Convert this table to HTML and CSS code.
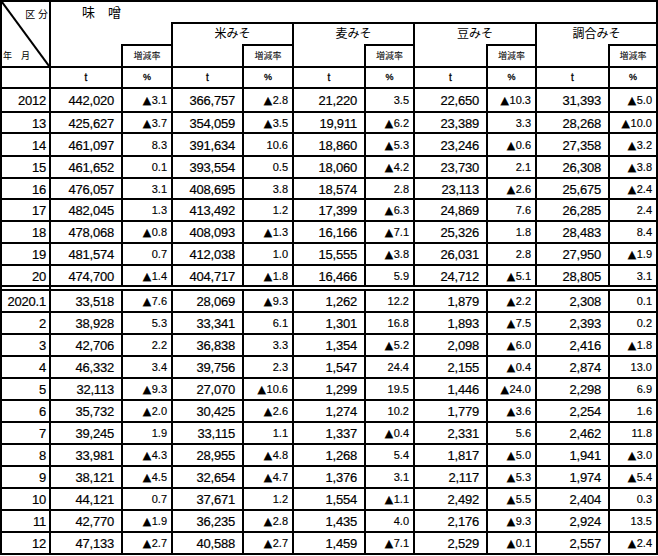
FILE: index.html
```html
<!DOCTYPE html>
<html lang="ja">
<head>
<meta charset="utf-8">
<title>味噌 生産量</title>
<link rel="stylesheet" href="styles.css">
</head>
<body>
<table class="tbl">
<colgroup>
<col class="w49"><col class="w72"><col class="w50"><col class="w71"><col class="w50"><col class="w72"><col class="w49"><col class="w73"><col class="w49"><col class="w73"><col class="w48">
</colgroup>
<tbody>
<tr class="hA">
<td class="corner" rowspan="3"><div class="corner-box"><svg class="diag" viewBox="0 0 100 100" preserveAspectRatio="none"><line x1="0" y1="0" x2="100" y2="100" stroke="#000" stroke-width="2" vector-effect="non-scaling-stroke"/></svg><span class="kubun">区 分</span><span class="nengetsu">年　月</span></div></td>
<td class="title nb-r nb-b">味　噌</td>
<td class="nb-l nb-r nb-b"></td>
<td class="nb-l" colspan="8"></td>
</tr>
<tr class="hB">
<td class="nb-t nb-b nb-r"></td>
<td class="nb-t nb-l"></td>
<td class="kind nb-b" colspan="2">米みそ</td>
<td class="kind nb-b" colspan="2">麦みそ</td>
<td class="kind nb-b" colspan="2">豆みそ</td>
<td class="kind nb-b" colspan="2">調合みそ</td>
</tr>
<tr class="hC">
<td class="nb-t"></td><td class="rate">増減率</td>
<td class="nb-t"></td><td class="rate">増減率</td>
<td class="nb-t"></td><td class="rate">増減率</td>
<td class="nb-t"></td><td class="rate">増減率</td>
<td class="nb-t"></td><td class="rate">増減率</td>
</tr>
<tr class="hD">
<td></td>
<td class="u">t</td><td class="u pc">%</td>
<td class="u">t</td><td class="u pc">%</td>
<td class="u">t</td><td class="u pc">%</td>
<td class="u">t</td><td class="u pc">%</td>
<td class="u">t</td><td class="u pc">%</td>
</tr>
<tr class="h24"><td class="yr">2012</td><td class="n">442,020</td><td class="p"><span class="tri">▲</span>3.1</td><td class="n">366,757</td><td class="p"><span class="tri">▲</span>2.8</td><td class="n">21,220</td><td class="p">3.5</td><td class="n">22,650</td><td class="p"><span class="tri">▲</span>10.3</td><td class="n">31,393</td><td class="p"><span class="tri">▲</span>5.0</td></tr>
<tr class="h21"><td class="yr">13</td><td class="n">425,627</td><td class="p"><span class="tri">▲</span>3.7</td><td class="n">354,059</td><td class="p"><span class="tri">▲</span>3.5</td><td class="n">19,911</td><td class="p"><span class="tri">▲</span>6.2</td><td class="n">23,389</td><td class="p">3.3</td><td class="n">28,268</td><td class="p"><span class="tri">▲</span>10.0</td></tr>
<tr class="h23"><td class="yr">14</td><td class="n">461,097</td><td class="p">8.3</td><td class="n">391,634</td><td class="p">10.6</td><td class="n">18,860</td><td class="p"><span class="tri">▲</span>5.3</td><td class="n">23,246</td><td class="p"><span class="tri">▲</span>0.6</td><td class="n">27,358</td><td class="p"><span class="tri">▲</span>3.2</td></tr>
<tr class="h22"><td class="yr">15</td><td class="n">461,652</td><td class="p">0.1</td><td class="n">393,554</td><td class="p">0.5</td><td class="n">18,060</td><td class="p"><span class="tri">▲</span>4.2</td><td class="n">23,730</td><td class="p">2.1</td><td class="n">26,308</td><td class="p"><span class="tri">▲</span>3.8</td></tr>
<tr class="h21"><td class="yr">16</td><td class="n">476,057</td><td class="p">3.1</td><td class="n">408,695</td><td class="p">3.8</td><td class="n">18,574</td><td class="p">2.8</td><td class="n">23,113</td><td class="p"><span class="tri">▲</span>2.6</td><td class="n">25,675</td><td class="p"><span class="tri">▲</span>2.4</td></tr>
<tr class="h22"><td class="yr">17</td><td class="n">482,045</td><td class="p">1.3</td><td class="n">413,492</td><td class="p">1.2</td><td class="n">17,399</td><td class="p"><span class="tri">▲</span>6.3</td><td class="n">24,869</td><td class="p">7.6</td><td class="n">26,285</td><td class="p">2.4</td></tr>
<tr class="h22"><td class="yr">18</td><td class="n">478,068</td><td class="p"><span class="tri">▲</span>0.8</td><td class="n">408,093</td><td class="p"><span class="tri">▲</span>1.3</td><td class="n">16,166</td><td class="p"><span class="tri">▲</span>7.1</td><td class="n">25,326</td><td class="p">1.8</td><td class="n">28,483</td><td class="p">8.4</td></tr>
<tr class="h22"><td class="yr">19</td><td class="n">481,574</td><td class="p">0.7</td><td class="n">412,038</td><td class="p">1.0</td><td class="n">15,555</td><td class="p"><span class="tri">▲</span>3.8</td><td class="n">26,031</td><td class="p">2.8</td><td class="n">27,950</td><td class="p"><span class="tri">▲</span>1.9</td></tr>
<tr class="h21"><td class="yr">20</td><td class="n">474,700</td><td class="p"><span class="tri">▲</span>1.4</td><td class="n">404,717</td><td class="p"><span class="tri">▲</span>1.8</td><td class="n">16,466</td><td class="p">5.9</td><td class="n">24,712</td><td class="p"><span class="tri">▲</span>5.1</td><td class="n">28,805</td><td class="p">3.1</td></tr>
<tr class="sep"><td></td><td colspan="10"></td></tr>
<tr class="h22"><td class="yr">2020.1</td><td class="n">33,518</td><td class="p"><span class="tri">▲</span>7.6</td><td class="n">28,069</td><td class="p"><span class="tri">▲</span>9.3</td><td class="n">1,262</td><td class="p">12.2</td><td class="n">1,879</td><td class="p"><span class="tri">▲</span>2.2</td><td class="n">2,308</td><td class="p">0.1</td></tr>
<tr class="h22"><td class="yr">2</td><td class="n">38,928</td><td class="p">5.3</td><td class="n">33,341</td><td class="p">6.1</td><td class="n">1,301</td><td class="p">16.8</td><td class="n">1,893</td><td class="p"><span class="tri">▲</span>7.5</td><td class="n">2,393</td><td class="p">0.2</td></tr>
<tr class="h22"><td class="yr">3</td><td class="n">42,706</td><td class="p">2.2</td><td class="n">36,838</td><td class="p">3.3</td><td class="n">1,354</td><td class="p"><span class="tri">▲</span>5.2</td><td class="n">2,098</td><td class="p"><span class="tri">▲</span>6.0</td><td class="n">2,416</td><td class="p"><span class="tri">▲</span>1.8</td></tr>
<tr class="h22"><td class="yr">4</td><td class="n">46,332</td><td class="p">3.4</td><td class="n">39,756</td><td class="p">2.3</td><td class="n">1,547</td><td class="p">24.4</td><td class="n">2,155</td><td class="p"><span class="tri">▲</span>0.4</td><td class="n">2,874</td><td class="p">13.0</td></tr>
<tr class="h22"><td class="yr">5</td><td class="n">32,113</td><td class="p"><span class="tri">▲</span>9.3</td><td class="n">27,070</td><td class="p"><span class="tri">▲</span>10.6</td><td class="n">1,299</td><td class="p">19.5</td><td class="n">1,446</td><td class="p"><span class="tri">▲</span>24.0</td><td class="n">2,298</td><td class="p">6.9</td></tr>
<tr class="h22"><td class="yr">6</td><td class="n">35,732</td><td class="p"><span class="tri">▲</span>2.0</td><td class="n">30,425</td><td class="p"><span class="tri">▲</span>2.6</td><td class="n">1,274</td><td class="p">10.2</td><td class="n">1,779</td><td class="p"><span class="tri">▲</span>3.6</td><td class="n">2,254</td><td class="p">1.6</td></tr>
<tr class="h22"><td class="yr">7</td><td class="n">39,245</td><td class="p">1.9</td><td class="n">33,115</td><td class="p">1.1</td><td class="n">1,337</td><td class="p"><span class="tri">▲</span>0.4</td><td class="n">2,331</td><td class="p">5.6</td><td class="n">2,462</td><td class="p">11.8</td></tr>
<tr class="h22"><td class="yr">8</td><td class="n">33,981</td><td class="p"><span class="tri">▲</span>4.3</td><td class="n">28,955</td><td class="p"><span class="tri">▲</span>4.8</td><td class="n">1,268</td><td class="p">5.4</td><td class="n">1,817</td><td class="p"><span class="tri">▲</span>5.0</td><td class="n">1,941</td><td class="p"><span class="tri">▲</span>3.0</td></tr>
<tr class="h22"><td class="yr">9</td><td class="n">38,121</td><td class="p"><span class="tri">▲</span>4.5</td><td class="n">32,654</td><td class="p"><span class="tri">▲</span>4.7</td><td class="n">1,376</td><td class="p">3.1</td><td class="n">2,117</td><td class="p"><span class="tri">▲</span>5.3</td><td class="n">1,974</td><td class="p"><span class="tri">▲</span>5.4</td></tr>
<tr class="h22"><td class="yr">10</td><td class="n">44,121</td><td class="p">0.7</td><td class="n">37,671</td><td class="p">1.2</td><td class="n">1,554</td><td class="p"><span class="tri">▲</span>1.1</td><td class="n">2,492</td><td class="p"><span class="tri">▲</span>5.5</td><td class="n">2,404</td><td class="p">0.3</td></tr>
<tr class="h22"><td class="yr">11</td><td class="n">42,770</td><td class="p"><span class="tri">▲</span>1.9</td><td class="n">36,235</td><td class="p"><span class="tri">▲</span>2.8</td><td class="n">1,435</td><td class="p">4.0</td><td class="n">2,176</td><td class="p"><span class="tri">▲</span>9.3</td><td class="n">2,924</td><td class="p">13.5</td></tr>
<tr class="h22"><td class="yr">12</td><td class="n">47,133</td><td class="p"><span class="tri">▲</span>2.7</td><td class="n">40,588</td><td class="p"><span class="tri">▲</span>2.7</td><td class="n">1,459</td><td class="p"><span class="tri">▲</span>7.1</td><td class="n">2,529</td><td class="p"><span class="tri">▲</span>0.1</td><td class="n">2,557</td><td class="p"><span class="tri">▲</span>2.4</td></tr>
</tbody>
</table>
</body>
</html>
```
FILE: styles.css
```css
html, body {
  margin: 0;
  padding: 0;
  background: #fff;
}
body {
  font-family: "Liberation Sans", "Noto Sans CJK JP", sans-serif;
  color: #000;
}
.tbl {
  border-collapse: collapse;
  table-layout: fixed;
  width: 658px;
}
.w48 { width: 48px; }
.w49 { width: 49px; }
.w50 { width: 50px; }
.w71 { width: 71px; }
.w72 { width: 72px; }
.w73 { width: 73px; }

.tbl td {
  box-sizing: border-box;
  border: 2px solid #000;
  padding: 0;
  white-space: nowrap;
  overflow: hidden;
  line-height: 1;
  vertical-align: middle;
}
.tbl td.nb-t { border-top: none; }
.tbl td.nb-b { border-bottom: none; }
.tbl td.nb-l { border-left: none; }
.tbl td.nb-r { border-right: none; }

.hA td, .hB td, .hC td { height: 22px; }
.hD td { height: 21px; }
.h21 td { height: 21px; }
.h22 td { height: 22px; }
.h23 td { height: 23px; }
.h24 td { height: 24px; }
.sep td { height: 4px; font-size: 0; line-height: 0; }

.corner-box {
  position: relative;
  height: 64px;
  display: flex;
  flex-direction: column;
  justify-content: space-between;
  font-size: 10px;
}
.diag {
  position: absolute;
  left: 0;
  top: 0;
  width: 100%;
  height: 100%;
}
.kubun {
  align-self: flex-end;
  padding: 8px 1px 0 0;
}
.nengetsu {
  align-self: flex-start;
  padding: 0 0 5px 1px;
  font-size: 9px;
}

.tbl td.title {
  font-size: 13px;
  padding-left: 31px;
}
.kind {
  font-size: 12px;
  text-align: center;
}
.rate {
  font-size: 9px;
  text-align: center;
}
.u {
  font-size: 10px;
  text-align: center;
  -webkit-text-stroke: 0.3px #000;
}
.u.pc { font-size: 9px; }

.tbl td.yr {
  font-size: 13px;
  text-align: right;
  padding: 1px 3px 0 0;
  letter-spacing: -0.2px;
  -webkit-text-stroke: 0.2px #000;
}
.tbl td.n {
  font-size: 13px;
  text-align: right;
  padding: 1px 7px 0 0;
  letter-spacing: -0.2px;
  -webkit-text-stroke: 0.2px #000;
}
.tbl td.p {
  font-size: 11px;
  text-align: right;
  padding: 1px 4px 0 0;
  -webkit-text-stroke: 0.15px #000;
}
.tri {
  font-family: "DejaVu Sans", sans-serif;
  font-size: 11px;
  letter-spacing: 0.5px;
}
```
